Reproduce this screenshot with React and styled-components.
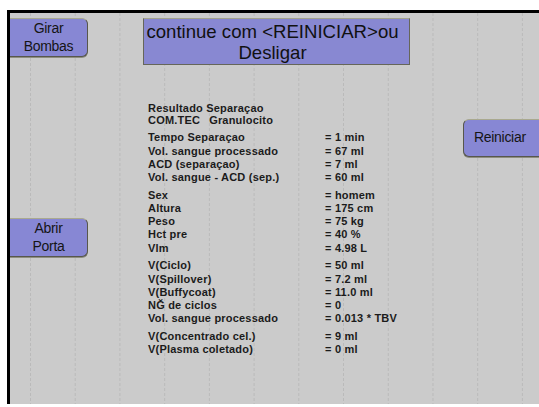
import styled, { createGlobalStyle } from "styled-components";

const Global = createGlobalStyle`
  html, body {
    margin: 0;
    padding: 0;
    background: #ffffff;
  }
  body {
    font-family: "Liberation Sans", Arial, sans-serif;
  }
`;

const Screen = styled.div`
  margin: 10px 0 0 7px;
  height: 394px;
  border-top: 3px solid #000000;
  border-left: 3px solid #000000;
  background-color: #cbcbcb;
  background-image: conic-gradient(from 270deg at 1px 3px, #bababa 90deg, transparent 0);
  background-size: 44.73px 5px;
  background-position: 20px 0;
  display: grid;
  grid-template-columns: 78px 1fr 76px;
  padding-top: 5px;
  box-sizing: border-box;
  overflow: hidden;
`;

const Side = styled.div`
  display: flex;
  flex-direction: column;
`;

const SideButton = styled.button`
  box-sizing: border-box;
  width: 100%;
  height: ${(p) => p.$h || 39}px;
  margin-top: ${(p) => p.$top || 0}px;
  padding: 0 0 2px;
  background: #8787d4;
  border: 1px solid #57574c;
  border-top-color: #a9a98f;
  border-${(p) => (p.$right ? "right" : "left")}: none;
  border-radius: ${(p) => (p.$right ? "6px 0 0 6px" : "0 6px 6px 0")};
  font-family: "Liberation Sans", Arial, sans-serif;
  font-size: 14px;
  line-height: 18px;
  letter-spacing: -0.3px;
  color: #151515;
  text-align: ${(p) => (p.$right ? "left" : "center")};
  padding-left: ${(p) => (p.$right ? 10 : 0)}px;
  box-shadow: 0 1px 0 #8e8e80;
`;

const Middle = styled.div`
  padding-left: 55px;
  display: flex;
  flex-direction: column;
`;

const Title = styled.div`
  box-sizing: border-box;
  width: 267px;
  height: 47px;
  padding: 1px 10px 0 2px;
  background: #8888d2;
  border: 1px solid #66665a;
  border-top-color: #a3a38b;
  font-size: 18.6px;
  line-height: 21px;
  color: #111111;
  text-align: center;
  display: flex;
  align-items: center;
  justify-content: center;
`;

const Data = styled.div`
  margin-top: 37px;
  padding-left: 5px;
  font-size: 11px;
  font-weight: bold;
  letter-spacing: 0.2px;
  line-height: 13.2px;
  color: #1b1b1b;
`;

const Group = styled.div`
  display: grid;
  grid-template-columns: 177px auto;
  margin-top: 4.6px;
`;

const Header = styled.div`
  display: flex;
  flex-direction: column;
  line-height: 12.4px;
`;

const HeadRow = styled.div`
  display: flex;
`;

const HeadKey = styled.span`
  flex: 0 0 auto;
  margin-right: 9px;
`;

const Value = styled.span`
  white-space: pre;
`;

const groups = [
  [
    ["Tempo Separaçao", "1 min"],
    ["Vol. sangue processado", "67 ml"],
    ["ACD (separaçao)", "7 ml"],
    ["Vol. sangue - ACD (sep.)", "60 ml"],
  ],
  [
    ["Sex", "homem"],
    ["Altura", "175 cm"],
    ["Peso", "75 kg"],
    ["Hct pre", "40 %"],
    ["Vlm", "4.98 L"],
  ],
  [
    ["V(Ciclo)", "50 ml"],
    ["V(Spillover)", "7.2 ml"],
    ["V(Buffycoat)", "11.0 ml"],
    ["NĞ de ciclos", "0"],
    ["Vol. sangue processado", "0.013 * TBV"],
  ],
  [
    ["V(Concentrado cel.)", "9 ml"],
    ["V(Plasma coletado)", "0 ml"],
  ],
];

export default function App() {
  return (
    <>
      <Global />
      <Screen>
        <Side>
          <SideButton>
            Girar
            <br />
            Bombas
          </SideButton>
          <SideButton $top={161}>
            Abrir
            <br />
            Porta
          </SideButton>
        </Side>

        <Middle>
          <Title>
            <div>
              continue com &lt;REINICIAR&gt;ou
              <br />
              Desligar
            </div>
          </Title>

          <Data>
            <Header>
              <span>Resultado Separaçao</span>
              <HeadRow>
                <HeadKey>COM.TEC</HeadKey>
                <span>Granulocito</span>
              </HeadRow>
            </Header>
            {groups.map((g, i) => (
              <Group key={i}>
                {g.map(([k, v]) => (
                  <Row key={k} label={k} value={v} />
                ))}
              </Group>
            ))}
          </Data>
        </Middle>

        <Side>
          <SideButton $right $top={101} $h={38}>
            Reiniciar
          </SideButton>
        </Side>
      </Screen>
    </>
  );
}

function Row({ label, value }) {
  return (
    <>
      <span>{label}</span>
      <Value>{`= ${value}`}</Value>
    </>
  );
}
